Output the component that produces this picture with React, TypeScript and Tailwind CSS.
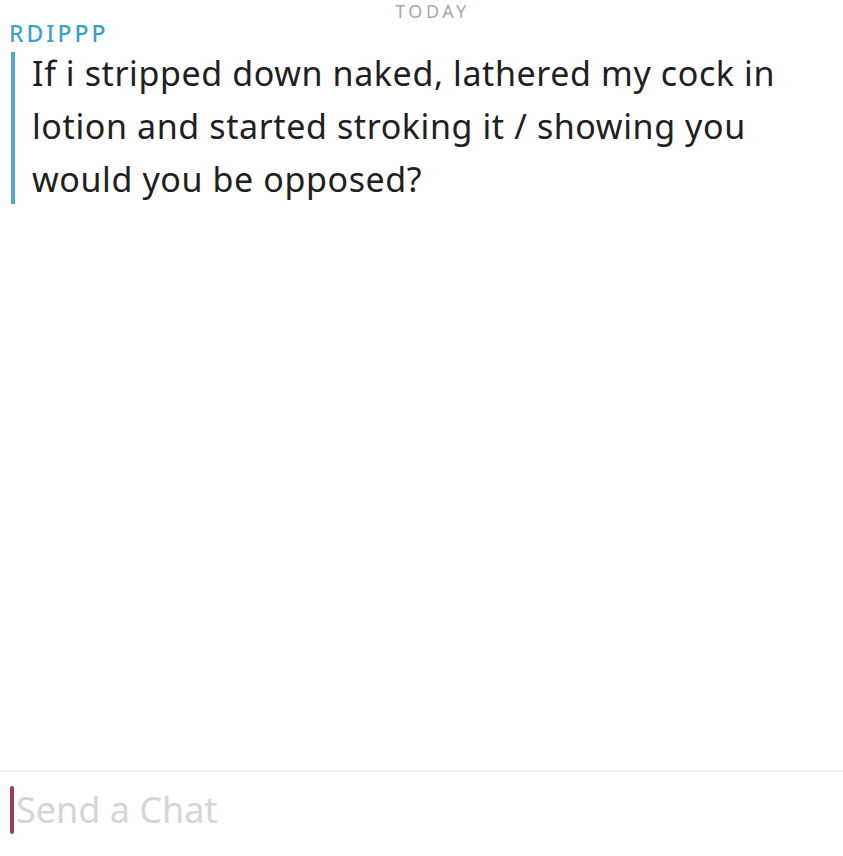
import React from "react";

const App = () => {
  return (
    <div className="flex h-[856px] w-[843px] flex-col bg-white font-['Noto_Sans',sans-serif]">
      <div className="flex-1">
        <p className="pl-[22px] text-center text-[18px] leading-[22px] tracking-[3.5px] text-[#a9a9a9]">
          TODAY
        </p>
        <p className="pl-[9px] text-[23px] font-medium leading-[22px] tracking-[3px] text-[#3d9fd2]">
          RDIPPP
        </p>
        <div className="mt-[8px] flex">
          <div className="ml-[11px] w-[4px] bg-[#4ea8d6]"></div>
          <p className="-mt-[5px] mb-[-2px] ml-[17px] w-[800px] text-[34px] leading-[53px] tracking-[0.6px] text-[#202020]">
            If i stripped down naked, lathered my cock in
            <br />
            lotion and started stroking it / showing you
            <br />
            would you be opposed?
          </p>
        </div>
      </div>
      <div className="h-[86px] border-t-2 border-[#f3f3f3]">
        <div className="mt-[14px] flex items-center">
          <div className="ml-[10px] h-[48px] w-[4px] rounded-sm bg-[#9e3c5e]"></div>
          <span className="ml-[2px] text-[36px] leading-[48px] text-[#d2d5d9]">
            Send a Chat
          </span>
        </div>
      </div>
    </div>
  );
};

export default App;
